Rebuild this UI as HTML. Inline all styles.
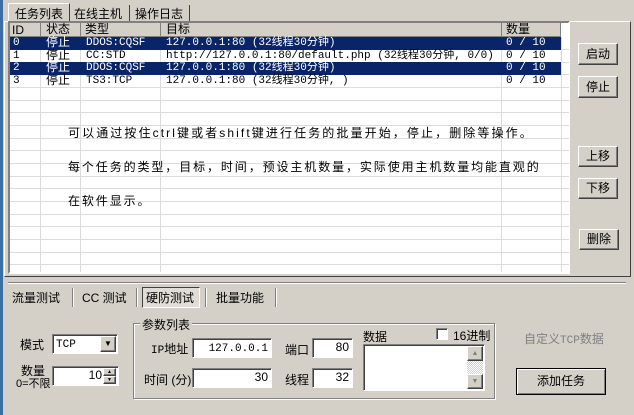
<!DOCTYPE html><html><head><meta charset="utf-8"><style>
*{box-sizing:border-box}
body{margin:0;width:634px;height:415px;background:#d4d0c8;position:relative;overflow:hidden;font:12px "Liberation Sans","Noto Sans CJK SC","WenQuanYi Zen Hei",sans-serif;color:#000}
.a{position:absolute}
.mono{font-family:"Liberation Mono","Noto Sans CJK SC",monospace;font-size:11px}
.btn{position:absolute;background:#d4d0c8;border:1px solid;border-color:#fff #404040 #404040 #fff;box-shadow:inset -1px -1px #808080;text-align:center;font-size:12px}
.inp{position:absolute;background:#fff;border:1px solid;border-color:#808080 #fff #fff #808080;box-shadow:inset 1px 1px #404040;text-align:right;padding-right:3px;font-size:12px;line-height:17px}
.row{position:absolute;left:10px;width:551px;height:13px;line-height:13px}
.row span{position:absolute;top:0}
.sel{background:#0a246a;color:#fff}
.hl{position:absolute;left:10px;width:559px;height:1px;background:#dcdcdc}
.vl{position:absolute;top:22px;width:1px;height:250px;background:#dcdcdc}
</style></head><body>
<div class="a" style="left:0;top:0;width:3px;height:415px;background:#3a6ea5"></div>
<div class="a" style="left:8px;top:3px;width:62px;height:19px;background:#d4d0c8;border:1px solid;border-color:#fff #404040 transparent #fff;padding:1px 6px">任务列表</div>
<div class="a" style="left:71px;top:5px;width:59px;height:16px;border-right:1px solid #404040;padding:0 3px">在线主机</div>
<div class="a" style="left:132px;top:5px;width:58px;height:16px;border-right:1px solid #404040;padding:0 3px">操作日志</div>
<div class="a" style="left:4px;top:21px;width:627px;height:256px;border:1px solid;border-color:#fff #404040 #404040 #fff"></div>
<div class="a" style="left:8px;top:21px;width:562px;height:253px;background:#fff;border:2px solid;border-color:#808080 #fff #fff #808080"></div>
<div class="a" style="left:10px;top:23px;width:551px;height:14px;background:#d4d0c8;border-bottom:1px solid #808080"></div>
<div class="a" style="left:12px;top:23px;line-height:14px">ID</div>
<div class="a" style="left:40px;top:23px;width:1px;height:14px;background:#808080"></div>
<div class="a" style="left:46px;top:22px;line-height:14px">状态</div>
<div class="a" style="left:80px;top:23px;width:1px;height:14px;background:#808080"></div>
<div class="a" style="left:85px;top:22px;line-height:14px">类型</div>
<div class="a" style="left:160px;top:23px;width:1px;height:14px;background:#808080"></div>
<div class="a" style="left:166px;top:22px;line-height:14px">目标</div>
<div class="a" style="left:501px;top:23px;width:1px;height:14px;background:#808080"></div>
<div class="a" style="left:506px;top:22px;line-height:14px">数量</div>
<div class="a" style="left:560px;top:23px;width:1px;height:14px;background:#808080"></div>
<div class="vl" style="left:40px;top:37px;height:235px"></div><div class="vl" style="left:80px;top:37px;height:235px"></div><div class="vl" style="left:160px;top:37px;height:235px"></div><div class="vl" style="left:501px;top:37px;height:235px"></div><div class="vl" style="left:561px;top:37px;height:235px"></div>
<div class="hl" style="top:49px"></div><div class="hl" style="top:62px"></div><div class="hl" style="top:74px"></div><div class="hl" style="top:87px"></div><div class="hl" style="top:100px"></div><div class="hl" style="top:112px"></div><div class="hl" style="top:125px"></div><div class="hl" style="top:138px"></div><div class="hl" style="top:150px"></div><div class="hl" style="top:163px"></div><div class="hl" style="top:176px"></div><div class="hl" style="top:188px"></div><div class="hl" style="top:201px"></div><div class="hl" style="top:214px"></div><div class="hl" style="top:226px"></div><div class="hl" style="top:239px"></div><div class="hl" style="top:252px"></div><div class="hl" style="top:264px"></div>
<div class="row sel mono" style="top:37px"><span style="left:3px">0</span><span style="left:36px;font-size:12px">停止</span><span style="left:76px">DDOS:CQSF</span><span style="left:156px">127.0.0.1:80 (32线程30分钟)</span><span style="left:496px">0 / 10</span></div>
<div class="row mono" style="top:50px"><span style="left:3px">1</span><span style="left:36px;font-size:12px">停止</span><span style="left:76px">CC:STD</span><span style="left:156px">http://127.0.0.1:80/default.php (32线程30分钟, 0/0)</span><span style="left:496px">0 / 10</span></div>
<div class="row sel mono" style="top:62px"><span style="left:3px">2</span><span style="left:36px;font-size:12px">停止</span><span style="left:76px">DDOS:CQSF</span><span style="left:156px">127.0.0.1:80 (32线程30分钟)</span><span style="left:496px">0 / 10</span></div>
<div class="row mono" style="top:75px"><span style="left:3px">3</span><span style="left:36px;font-size:12px">停止</span><span style="left:76px">TS3:TCP</span><span style="left:156px">127.0.0.1:80 (32线程30分钟, )</span><span style="left:496px">0 / 10</span></div>
<div class="a" style="left:68px;top:124px;letter-spacing:2.1px;white-space:nowrap">可以通过按住ctrl键或者shift键进行任务的批量开始，停止，删除等操作。</div>
<div class="a" style="left:68px;top:158px;letter-spacing:1.9px;white-space:nowrap">每个任务的类型，目标，时间，预设主机数量，实际使用主机数量均能直观的</div>
<div class="a" style="left:68px;top:192px;letter-spacing:1.9px">在软件显示。</div>
<div class="btn" style="left:578px;top:43px;width:40px;height:22px;line-height:20px">启动</div>
<div class="btn" style="left:578px;top:76px;width:40px;height:22px;line-height:20px">停止</div>
<div class="btn" style="left:578px;top:146px;width:40px;height:21px;line-height:19px">上移</div>
<div class="btn" style="left:578px;top:178px;width:40px;height:21px;line-height:19px">下移</div>
<div class="btn" style="left:579px;top:229px;width:40px;height:21px;line-height:19px">删除</div>
<div class="a" style="left:8px;top:282px;width:618px;height:2px;border-top:1px solid #808080;border-bottom:1px solid #fff"></div>
<div class="a" style="left:12px;top:289px">流量测试</div>
<div class="a" style="left:72px;top:288px;width:1px;height:19px;background:#808080;box-shadow:1px 0 #fff"></div>
<div class="a" style="left:82px;top:289px">CC 测试</div>
<div class="a" style="left:136px;top:288px;width:1px;height:19px;background:#808080;box-shadow:1px 0 #fff"></div>
<div class="a" style="left:142px;top:287px;width:58px;height:21px;border:1px solid;border-color:#404040 #fff #fff #404040;background:#e0ddd6;padding:1px 3px">硬防测试</div>
<div class="a" style="left:205px;top:288px;width:1px;height:19px;background:#808080;box-shadow:1px 0 #fff"></div>
<div class="a" style="left:216px;top:289px">批量功能</div>
<div class="a" style="left:275px;top:288px;width:1px;height:19px;background:#808080;box-shadow:1px 0 #fff"></div>
<div class="a" style="left:20px;top:336px">模式</div>
<div class="inp" style="left:52px;top:334px;width:66px;height:20px;text-align:left;padding-left:3px" ><span class="mono">TCP</span></div>
<div class="btn" style="left:100px;top:336px;width:16px;height:16px;font-size:8px;line-height:14px">▼</div>
<div class="a" style="left:21px;top:365px;line-height:12px">数量</div>
<div class="a" style="left:16px;top:379px;font-size:11px;line-height:11px">0=不限</div>
<div class="inp" style="left:52px;top:366px;width:67px;height:20px;padding-right:16px">10</div>
<div class="btn" style="left:103px;top:368px;width:13px;height:8px;font-size:5px;line-height:6px">▲</div>
<div class="btn" style="left:103px;top:376px;width:13px;height:8px;font-size:5px;line-height:6px">▼</div>
<div class="a" style="left:133px;top:323px;width:362px;height:76px;border:1px solid #808080;box-shadow:1px 1px #fff,inset 1px 1px #fff"></div>
<div class="a" style="left:140px;top:316px;background:#d4d0c8;padding:0 2px">参数列表</div>
<div class="a" style="left:151px;top:340px"><span class="mono">IP</span>地址</div>
<div class="inp" style="left:192px;top:338px;width:80px;height:20px"><span class="mono">127.0.0.1</span></div>
<div class="a" style="left:285px;top:341px">端口</div>
<div class="inp" style="left:312px;top:338px;width:41px;height:20px">80</div>
<div class="a" style="left:144px;top:371px">时间 (分)</div>
<div class="inp" style="left:192px;top:368px;width:80px;height:20px">30</div>
<div class="a" style="left:285px;top:371px">线程</div>
<div class="inp" style="left:312px;top:368px;width:41px;height:20px">32</div>
<div class="a" style="left:363px;top:328px">数据</div>
<div class="a" style="left:436px;top:328px;width:12px;height:12px;background:#fff;border:1px solid;border-color:#808080 #fff #fff #808080;box-shadow:inset 1px 1px #404040"></div>
<div class="a" style="left:453px;top:327px">16进制</div>
<div class="inp" style="left:363px;top:344px;width:122px;height:47px"></div>
<div class="a" style="left:467px;top:346px;width:16px;height:43px;background:repeating-conic-gradient(#fff 0 25%,#d4d0c8 0 50%) 0 0/2px 2px"></div>
<div class="btn" style="left:467px;top:346px;width:16px;height:15px;font-size:7px;line-height:13px;color:#808080">▲</div>
<div class="btn" style="left:467px;top:374px;width:16px;height:15px;font-size:7px;line-height:13px;color:#808080">▼</div>
<div class="a" style="left:524px;top:330px;color:#808080">自定义<span class="mono">TCP</span>数据</div>
<div class="btn" style="left:516px;top:368px;width:90px;height:27px;line-height:24px;border:1px solid #000;box-shadow:inset 1px 1px #fff,inset -1px -1px #808080">添加任务</div>
</body></html>
